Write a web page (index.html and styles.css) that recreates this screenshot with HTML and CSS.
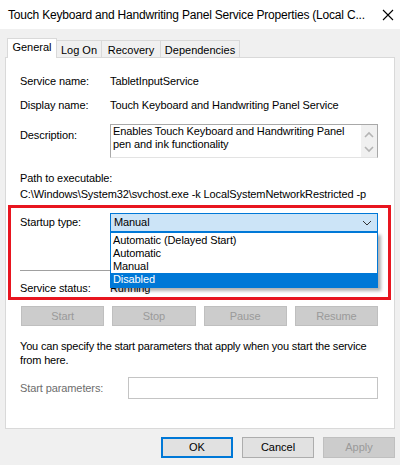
FILE: index.html
```html
<!DOCTYPE html>
<html>
<head>
<meta charset="utf-8">
<link rel="stylesheet" href="styles.css">
</head>
<body>
<div class="titlebar">
  <span class="title">Touch Keyboard and Handwriting Panel Service Properties (Local C...</span>
  <svg class="close" width="12" height="12" viewBox="0 0 12 12"><path d="M1 1 L11 11 M11 1 L1 11" stroke="#000" stroke-width="1.1" fill="none"/></svg>
</div>
<div class="window">
  <div class="tabs">
    <div class="tab selected">General</div>
    <div class="tab t-logon">Log On</div>
    <div class="tab t-recovery">Recovery</div>
    <div class="tab t-deps">Dependencies</div>
  </div>
  <div class="panel">
    <div class="row r1"><span>Service name:</span><span>TabletInputService</span></div>
    <div class="row r2"><span>Display name:</span><span>Touch Keyboard and Handwriting Panel Service</span></div>
    <div class="row r3">
      <span class="desc-label">Description:</span>
      <div class="descbox">
        <div class="desctext">Enables Touch Keyboard and Handwriting Panel pen and ink functionality</div>
        <div class="scroll">
          <svg width="10" height="7" viewBox="0 0 10 7"><path d="M1 6 L5 2 L9 6" stroke="#b4b4b4" stroke-width="1.6" fill="none"/></svg>
          <svg width="10" height="7" viewBox="0 0 10 7"><path d="M1 1 L5 5 L9 1" stroke="#b4b4b4" stroke-width="1.6" fill="none"/></svg>
        </div>
      </div>
    </div>
    <div class="path">
      <div>Path to executable:</div>
      <div>C:\Windows\System32\svchost.exe -k LocalSystemNetworkRestricted -p</div>
    </div>
    <div class="redbox">
      <div class="row startup">
        <span>Startup type:</span>
        <div class="combo">
          <span>Manual</span>
          <svg width="10" height="6" viewBox="0 0 10 6"><path d="M1 1 L5 5 L9 1" stroke="#333" stroke-width="1" fill="none"/></svg>
          <div class="droplist">
            <div class="opt">Automatic (Delayed Start)</div>
            <div class="opt">Automatic</div>
            <div class="opt">Manual</div>
            <div class="opt hl">Disabled</div>
          </div>
        </div>
      </div>
      <div class="sep"></div>
      <div class="row status"><span>Service status:</span><span>Running</span></div>
    </div>
    <div class="ctrl">
      <div class="btn dis">Start</div>
      <div class="btn dis">Stop</div>
      <div class="btn dis">Pause</div>
      <div class="btn dis">Resume</div>
    </div>
    <p class="info">You can specify the start parameters that apply when you start the service from here.</p>
    <div class="params">
      <span class="plabel">Start parameters:</span>
      <div class="pinput"></div>
    </div>
  </div>
  <div class="footer">
    <div class="fbtn ok">OK</div>
    <div class="fbtn">Cancel</div>
    <div class="fbtn dis">Apply</div>
  </div>
</div>
</body>
</html>
```
FILE: styles.css
```css
* { box-sizing: border-box; }
html, body { margin: 0; padding: 0; }
body {
  width: 400px;
  height: 465px;
  overflow: hidden;
  background: #f0f0f0;
  font-family: "Liberation Sans", Arial, sans-serif;
  font-size: 11px;
  color: #000;
}
.titlebar {
  height: 29px;
  background: #fff;
  display: flex;
  align-items: center;
  justify-content: space-between;
  padding: 0 6px 0 8px;
}
.title { font-size: 12px; line-height: 14px; letter-spacing: -0.2px; }
.close { display: block; }
.window { padding: 9px 5px 0 5px; }
.tabs {
  display: flex;
  align-items: flex-end;
  height: 20px;
  margin: 0 0 -1px 2px;
  position: relative;
  z-index: 1;
}
.tab {
  height: 18px;
  border-top: 1px solid #d9d9d9;
  border-right: 1px solid #d9d9d9;
  border-bottom: 1px solid #d9d9d9;
  background: #f0f0f0;
  text-align: center;
  line-height: 17px;
  padding-top: 1px;
}
.tab.selected {
  height: 20px;
  width: 50px;
  background: #fff;
  border-left: 1px solid #d9d9d9;
  border-bottom: none;
  line-height: 16px;
  padding-top: 0;
}
.t-logon { width: 45px; }
.t-recovery { width: 59px; }
.t-deps { width: 79px; }
.panel {
  height: 372px;
  background: #fff;
  border: 1px solid #d9d9d9;
  padding: 0 16px 0 14px;
  line-height: 13px;
  letter-spacing: -0.1px;
}
.row { display: grid; grid-template-columns: 90px 1fr; }
.r1 { padding-top: 17px; }
.r2 { margin-top: 11px; }
.r3 { margin-top: 12px; }
.desc-label { padding-top: 5px; }
.descbox {
  height: 34px;
  border: 1px solid #a8a8a8;
  border-bottom-color: #e3e3e3;
  display: flex;
}
.desctext { flex: 1; padding: 0 0 0 2px; line-height: 13px; }
.scroll {
  width: 16px;
  background: #f0f0f0;
  display: flex;
  flex-direction: column;
  align-items: center;
  justify-content: space-between;
  padding: 6px 0 4px;
}
.scroll svg { display: block; }
.path { margin-top: 12px; line-height: 16px; }
.redbox {
  height: 95px;
  margin: 3px -13px 0 -12px;
  border: 3px solid #e8151f;
  padding: 5px 10px 0 9px;
}
.startup { align-items: center; }
.combo {
  position: relative;
  height: 19px;
  background: #cce4f7;
  border: 1px solid #0078d7;
  display: flex;
  align-items: center;
  justify-content: space-between;
  padding: 0 5px 0 3px;
}
.combo svg { display: block; }
.droplist {
  position: absolute;
  left: -1px;
  right: -1px;
  top: 18px;
  height: 56px;
  background: #fff;
  border: 1px solid #0078d7;
  box-shadow: 3px 3px 3px rgba(0,0,0,0.3);
  padding-top: 1px;
  z-index: 2;
}
.opt { height: 13px; line-height: 13px; padding-left: 2px; }
.opt.hl { height: 14px; background: #0078d7; color: #fff; }
.sep { margin-top: 38px; height: 1px; background: #a0a0a0; }
.status { margin-top: 11px; }
.ctrl {
  margin: 6px 0 0 1px;
  display: grid;
  grid-template-columns: repeat(4, 1fr);
  gap: 8px;
}
.btn {
  height: 20px;
  text-align: center;
  line-height: 18px;
}
.dis {
  background: #cccccc;
  border: 1px solid #bfbfbf;
  color: #9a9a9a;
}
.info { margin: 13px 0 0; line-height: 14px; font-size: 11px; letter-spacing: -0.18px; }
.params {
  margin-top: 10px;
  display: grid;
  grid-template-columns: 108px 1fr;
  align-items: center;
}
.plabel { color: #6d6d6d; }
.pinput { height: 22px; border: 1px solid #c4c4c4; }
.footer {
  display: flex;
  justify-content: flex-end;
  gap: 9px;
  margin-top: 8px;
}
.fbtn {
  width: 72px;
  height: 21px;
  background: #e1e1e1;
  border: 1px solid #adadad;
  text-align: center;
  line-height: 19px;
}
.fbtn.ok { border: 2px solid #0078d7; line-height: 17px; }
.fbtn.dis { background: #cccccc; border-color: #bfbfbf; color: #9a9a9a; }
```
